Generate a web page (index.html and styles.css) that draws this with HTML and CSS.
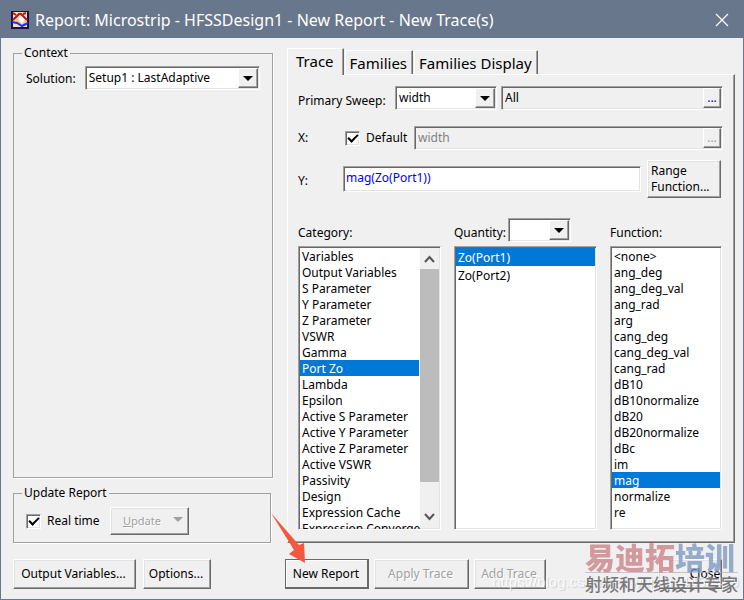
FILE: index.html
```html
<!DOCTYPE html>
<html lang="en">
<head>
<meta charset="utf-8">
<title>Report: Microstrip - HFSSDesign1 - New Report - New Trace(s)</title>
<link rel="stylesheet" href="styles.css">
</head>
<body>
<header class="titlebar">
  <svg class="app-icon" viewBox="0 0 18 18" aria-hidden="true">
    <rect width="18" height="18" fill="#20104a"/>
    <rect x="2" y="1" width="14" height="15" fill="#f6e2b0"/>
    <path d="M5 8 9 4l6 4 1 5-7 1-5-2z" fill="#f7c090"/>
    <path d="M7 8 10 4l4 4-3 5z" fill="#fff"/>
    <path d="M2 2 5 4M2 9 8 3l2 0 6 6M12 3l3-1" fill="none" stroke="#b01818" stroke-width="2"/>
    <path d="M1 11l5 1 5 3 6-3" fill="none" stroke="#1830f0" stroke-width="2"/>
  </svg>
  <h1 class="title">Report: Microstrip - HFSSDesign1 - New Report - New Trace(s)</h1>
  <button class="close-x" aria-label="Close window">
    <svg viewBox="0 0 12 12" aria-hidden="true"><path d="M0 0 12 12M12 0 0 12" fill="none" stroke="#fff" stroke-width="1.2"/></svg>
  </button>
</header>

<form class="dialog">
  <div class="columns">
    <div class="side">
      <fieldset class="group context">
        <legend>Context</legend>
        <div class="row">
          <label for="solution">Solution:</label>
          <span class="combo solution"><select id="solution"><option>Setup1 : LastAdaptive</option></select><i class="drop"></i></span>
        </div>
      </fieldset>
      <fieldset class="group update">
        <legend>Update Report</legend>
        <div class="row">
          <input class="check" type="checkbox" id="realtime" checked>
          <label for="realtime">Real time</label>
          <button type="button" class="btn update-btn" disabled><span><u>U</u>pdate</span><i class="tri"></i></button>
        </div>
      </fieldset>
    </div>

    <div class="main">
      <div class="tabs" role="tablist">
        <button type="button" class="tab active" role="tab" aria-selected="true">Trace</button>
        <button type="button" class="tab" role="tab">Families</button>
        <button type="button" class="tab" role="tab">Families Display</button>
      </div>
      <div class="panel" role="tabpanel">
        <div class="row sweep">
          <label for="sweep">Primary Sweep:</label>
          <span class="combo sweep-combo"><select id="sweep"><option>width</option></select><i class="drop"></i></span>
          <span class="field"><input type="text" aria-label="Sweep values" value="All"><button type="button" class="dots">...</button></span>
        </div>
        <div class="row xrow">
          <span class="axis">X:</span>
          <input class="check" type="checkbox" id="default" checked>
          <label for="default">Default</label>
          <span class="field"><input type="text" aria-label="X expression" value="width" disabled><button type="button" class="dots" disabled>...</button></span>
        </div>
        <div class="row yrow">
          <label class="axis" for="y">Y:</label>
          <input class="expr" type="text" id="y" value="mag(Zo(Port1))">
          <button type="button" class="btn range">Range<br>Function...</button>
        </div>
        <div class="lists">
          <div class="list-col">
            <div class="list-head"><label for="category">Category:</label></div>
            <select class="list category" id="category" size="18">
              <option>Variables</option><option>Output Variables</option><option>S Parameter</option><option>Y Parameter</option><option>Z Parameter</option><option>VSWR</option><option>Gamma</option><option selected>Port Zo</option><option>Lambda</option><option>Epsilon</option><option>Active S Parameter</option><option>Active Y Parameter</option><option>Active Z Parameter</option><option>Active VSWR</option><option>Passivity</option><option>Design</option><option>Expression Cache</option><option>Expression Converge</option>
            </select>
            <span class="scroll" aria-hidden="true">
              <svg viewBox="0 0 19 21"><path d="M5 14l4.500-5 4.500 5" fill="none" stroke="#555" stroke-width="2"/></svg>
              <i class="thumb"></i>
              <svg viewBox="0 0 19 21"><path d="M5 7l4.500 5 4.500-5" fill="none" stroke="#555" stroke-width="2"/></svg>
            </span>
          </div>
          <div class="list-col">
            <div class="list-head"><label class="quantity-label" for="quantity">Quantity:</label><span class="combo filter"><select aria-label="Quantity filter"><option></option></select><i class="drop"></i></span></div>
            <select class="list quantity" id="quantity" size="15">
              <option selected>Zo(Port1)</option><option>Zo(Port2)</option>
            </select>
          </div>
          <div class="list-col">
            <div class="list-head"><label for="function">Function:</label></div>
            <select class="list function" id="function" size="17">
              <option>&lt;none&gt;</option><option>ang_deg</option><option>ang_deg_val</option><option>ang_rad</option><option>arg</option><option>cang_deg</option><option>cang_deg_val</option><option>cang_rad</option><option>dB10</option><option>dB10normalize</option><option>dB20</option><option>dB20normalize</option><option>dBc</option><option>im</option><option selected>mag</option><option>normalize</option><option>re</option>
            </select>
          </div>
        </div>
      </div>
    </div>
  </div>

  <div class="footer">
    <div class="footer-left">
      <button type="button" class="btn variables">Output Variables...</button>
      <button type="button" class="btn options">Options...</button>
    </div>
    <div class="footer-right">
      <button type="submit" class="btn primary">New Report</button>
      <button type="button" class="btn apply" disabled>Apply Trace</button>
      <button type="button" class="btn add" disabled>Add Trace</button>
      <button type="button" class="btn close">Close</button>
    </div>
  </div>

  <svg class="pointer" viewBox="0 0 34 50" aria-hidden="true"><path d="M0 0 28 32 33 30 34 50 18 41 23 37z" fill="#f15a40"/></svg>
  <div class="url-mark">https://blog.csdn.net/weixin_4458419</div>
  <div class="brand-mark">
    <div class="brand-top"><span class="red">易迪拓</span><span class="blue">培训</span></div>
    <div class="brand-sub">射频和天线设计专家</div>
  </div>
</form>
</body>
</html>
```

FILE: styles.css
```css
* { box-sizing: border-box; }

body {
  margin: 0;
  min-height: 100vh;
  display: flex;
  flex-direction: column;
  background: #f0f0f0;
  border: 1px solid #68778b;
  font-family: "Noto Sans", sans-serif;
  font-size: 12px;
  line-height: 16px;
  color: #000;
}

button, input, select { font: inherit; color: inherit; margin: 0; border-radius: 0; }
i { font-style: normal; }

.titlebar {
  display: flex;
  align-items: center;
  height: 37px;
  padding: 0 15px 0 10px;
  background: #68778b;
  color: #fff;
}
.app-icon { width: 18px; height: 18px; margin-right: 6px; }
.title { flex: 1; margin: 0; font: 400 16px/24px "Noto Sans", sans-serif; white-space: nowrap; }
.close-x { display: flex; padding: 0; border: 0; background: none; }
.close-x svg { width: 12px; height: 12px; overflow: visible; }

.dialog {
  position: relative;
  flex: 1;
  display: flex;
  flex-direction: column;
  padding: 7px 8px 10px 12px;
}
.columns { flex: 1; display: grid; grid-template-columns: 260px 1fr; gap: 14px; }
.side { display: flex; flex-direction: column; gap: 7px; }
.row { display: flex; align-items: center; }
.row label { white-space: nowrap; }

.group {
  margin: 0;
  min-width: 0;
  padding: 0 12px;
  border: 1px solid #a0a0a0;
  box-shadow: 1px 1px 0 #fff;
}
.group legend { padding: 0 2px; margin-left: -4px; }
.context { flex: 1; }
.context .row { padding-top: 5px; }
.context label { width: 59px; padding-top: 1px; }
.update { height: 58px; margin-right: 2px; }
.update .row { gap: 6px; padding-top: 6px; }
.update label { width: 54px; }

.combo { position: relative; display: block; }
.combo select {
  display: block;
  width: 100%;
  height: 24px;
  padding: 0 20px 0 3px;
  appearance: none;
  background: #fff;
  outline: 0;
}
.combo select, .list, .field, .expr, .check {
  border: 1px solid;
  border-color: #a0a0a0 #fff #fff #a0a0a0;
  box-shadow: inset 1px 1px 0 #696969, inset -1px -1px 0 #e3e3e3;
}
.drop {
  position: absolute;
  top: 2px;
  right: 2px;
  bottom: 2px;
  width: 20px;
  display: flex;
  align-items: center;
  justify-content: center;
  background: #f0f0f0;
  border: 1px solid;
  border-color: #fff #696969 #696969 #fff;
  box-shadow: inset -1px -1px 0 #a0a0a0;
  pointer-events: none;
}
.drop::after { content: ""; border: 5px solid transparent; border-top-color: #000; border-bottom: 0; }
.solution { width: 176px; }

.check {
  appearance: none;
  flex: none;
  display: grid;
  place-items: center;
  width: 15px;
  height: 15px;
  background: #fff;
}
.check:checked::before {
  content: "";
  width: 8px;
  height: 4px;
  margin-top: -2px;
  border-left: 2px solid #000;
  border-bottom: 2px solid #000;
  rotate: -45deg;
}

.btn {
  height: 30px;
  padding: 0 6px 0 4px;
  background: #f0f0f0;
  border: 1px solid;
  border-color: #fff #696969 #696969 #fff;
  box-shadow: inset -1px -1px 0 #a0a0a0, inset 1px 1px 0 #e3e3e3;
  white-space: nowrap;
}
.btn:disabled { color: #a0a0a0; text-shadow: 1px 1px 0 #fff; }
.update-btn { display: flex; align-items: center; justify-content: space-between; width: 79px; height: 28px; margin-left: 3px; padding: 0 5px 0 12px; font-size: 11px; }
.tri { border: 5px solid transparent; border-top-color: #a0a0a0; border-bottom: 0; margin-top: -4px; }

.main { display: flex; flex-direction: column; min-width: 0; }
.tabs { display: flex; align-items: flex-end; gap: 1px; height: 29px; }
.tab {
  height: 24px;
  padding: 0 5px 0 4px;
  background: #f0f0f0;
  border: 1px solid;
  border-color: #fff #696969 #f0f0f0 #fff;
  border-bottom: 0;
  box-shadow: inset -1px 0 0 #a0a0a0;
  font: 400 15px/24px "Noto Sans", sans-serif;
  white-space: nowrap;
}
.tab.active { position: relative; height: 27px; padding: 0 9px 2px 8px; margin-bottom: -1px; }
.panel {
  flex: 1;
  display: flex;
  flex-direction: column;
  padding: 11px 11px 12px 10px;
  border: 1px solid;
  border-color: #fff #696969 #696969 #fff;
  box-shadow: inset -1px -1px 0 #a0a0a0;
}
.sweep { height: 24px; }
.sweep label { width: 97px; padding-top: 5px; }
.sweep-combo { width: 102px; margin-right: 4px; }
.field { flex: 1; display: flex; height: 24px; min-width: 0; padding: 1px; }
.field input { flex: 1; min-width: 0; padding: 0 2px; border: 0; background: none; outline: 0; }
.field input:disabled { color: #808080; }
.dots { width: 18px; padding: 0; border: 1px solid; border-color: #fff #696969 #696969 #fff; box-shadow: inset -1px -1px 0 #a0a0a0; background: #f0f0f0; color: #00f; line-height: 14px; }
.dots:disabled { color: #a0a0a0; }
.axis { width: 45px; }
.xrow { height: 24px; margin-top: 16px; }
.xrow .axis { width: 47px; }
.xrow label { width: 48px; margin-left: 6px; }
.yrow { height: 38px; margin-top: 10px; padding-right: 2px; }
.expr { flex: 1; min-width: 0; height: 26px; padding: 0 2px 3px; background: #fff; color: #00f; outline: 0; }
.yrow label { padding-top: 3px; }
.range { width: 74px; height: 38px; margin-left: 6px; padding: 0 3px; text-align: left; }

.lists { flex: 1; display: grid; grid-template-columns: 143px 143px 1fr; gap: 13px; margin-top: 20px; padding-right: 1px; }
.list-col { position: relative; display: flex; flex-direction: column; min-width: 0; }
.list-head { display: flex; align-items: flex-start; height: 28px; }
.list-head label { padding-top: 7px; }
.quantity-label { width: 52px; }
.filter { width: 63px; margin-left: 2px; }
.list {
  flex: 1 1 0;
  min-height: 0;
  width: 100%;
  padding: 1px;
  background: #fff;
  outline: 0;
  overflow: hidden;
}
.list option { height: 16px; min-height: 16px; padding: 0 2px; line-height: 16px; }
.quantity option { height: 18px; padding-top: 1px; }
.list option:checked { background-image: linear-gradient(#0078d7, #0078d7); -webkit-text-fill-color: #fff; }
.category { padding-right: 21px; }
.scroll {
  position: absolute;
  top: 30px;
  right: 2px;
  bottom: 2px;
  width: 19px;
  display: flex;
  flex-direction: column;
  background: #f0f0f0;
}
.scroll svg { width: 19px; height: 21px; }
.thumb { flex: 1; background: #bcbcbc; margin-bottom: 25px; }

.footer { display: grid; grid-template-columns: 260px 1fr; gap: 12px; margin-top: 16px; padding-right: 13px; }
.footer-left { display: flex; gap: 7px; }
.footer-right { display: flex; gap: 5px; }
.variables { width: 123px; }
.options { width: 68px; }
.primary { width: 84px; border-color: #696969; box-shadow: inset -1px -1px 0 #696969, inset 1px 1px 0 #fff; }
.apply { width: 95px; }
.add { width: 72px; }
.close { width: 64px; margin-left: auto; padding: 0 0 0 30px; }

.pointer { position: absolute; left: 270px; bottom: 36px; width: 34px; height: 50px; }
.url-mark, .brand-mark { position: absolute; pointer-events: none; white-space: nowrap; }
.url-mark { right: 4px; bottom: 8px; font: 15px/18px "Liberation Sans", sans-serif; color: #fff; text-shadow: 1px 1px 1px #bbb; opacity: .6; }
.brand-mark { right: 5px; bottom: 4px; font-family: "Noto Sans CJK SC", sans-serif; }
.brand-top { font-size: 30px; line-height: 32px; font-weight: 900; border-bottom: 1px solid #b9b6c8; opacity: .75; }
.red { color: #c97c83; }
.blue { color: #7895c0; }
.brand-sub { font-size: 17px; line-height: 22px; font-weight: 500; color: #77777b; }
```
